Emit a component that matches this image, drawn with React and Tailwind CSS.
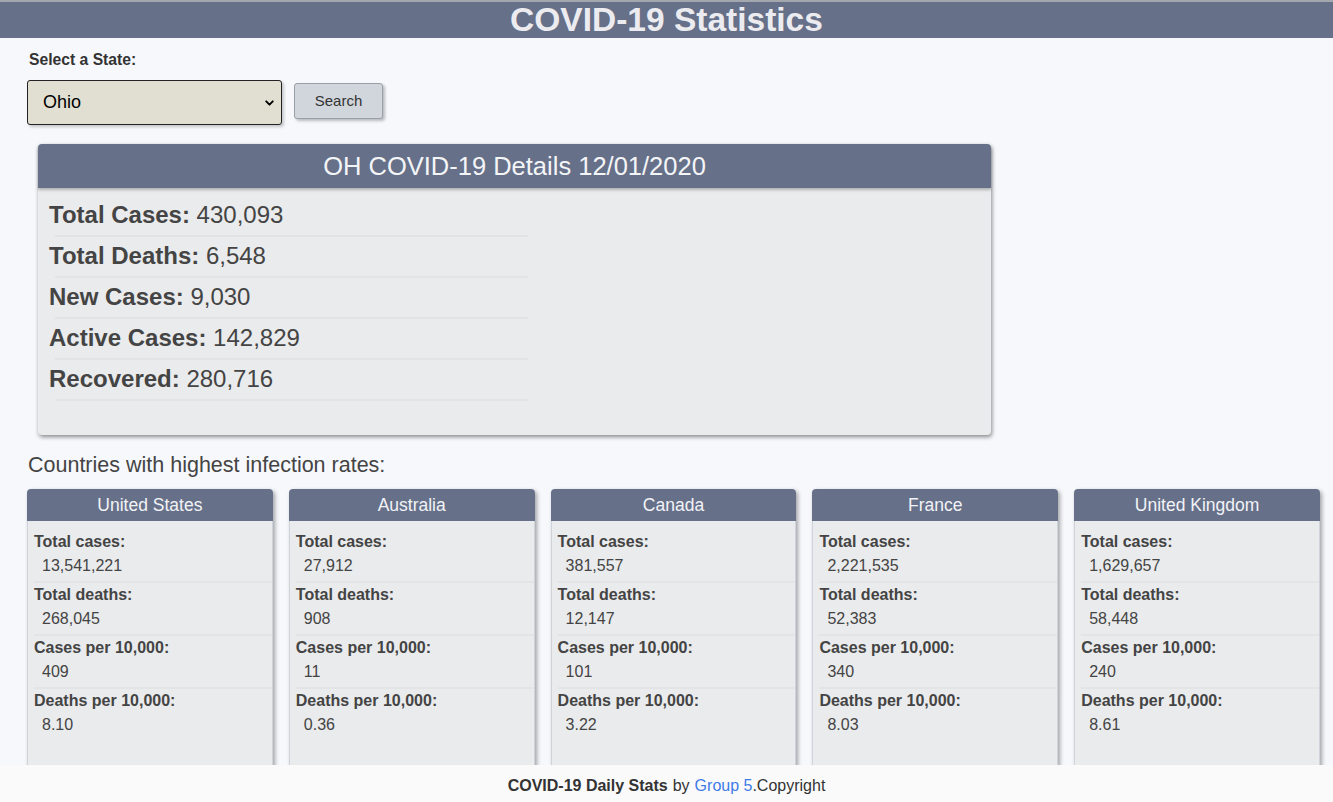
import { ChevronDown } from "lucide-react";

const details = [
  { label: "Total Cases:", value: "430,093" },
  { label: "Total Deaths:", value: "6,548" },
  { label: "New Cases:", value: "9,030" },
  { label: "Active Cases:", value: "142,829" },
  { label: "Recovered:", value: "280,716" },
];

const countries = [
  { name: "United States", cases: "13,541,221", deaths: "268,045", casesPer: "409", deathsPer: "8.10" },
  { name: "Australia", cases: "27,912", deaths: "908", casesPer: "11", deathsPer: "0.36" },
  { name: "Canada", cases: "381,557", deaths: "12,147", casesPer: "101", deathsPer: "3.22" },
  { name: "France", cases: "2,221,535", deaths: "52,383", casesPer: "340", deathsPer: "8.03" },
  { name: "United Kingdom", cases: "1,629,657", deaths: "58,448", casesPer: "240", deathsPer: "8.61" },
];

function StatRow({ label, value, last }) {
  return (
    <div className={`pt-[2px] pb-[5px] ${last ? "" : "border-b-2 border-[#e3e4e6]"}`}>
      <div className="text-[16px] font-bold leading-[20px]">{label}</div>
      <div className="mt-[4px] pl-2 text-[16px] leading-[20px]">{value}</div>
    </div>
  );
}

function CountryCard({ country }) {
  return (
    <div className="flex flex-col rounded-t-[4px] shadow-[2px_2px_4px_rgba(0,0,0,0.35)]">
      <div className="flex h-8 items-center justify-center rounded-t-[4px] bg-[#667089] text-[17.5px] text-[#f2f3f6]">
        {country.name}
      </div>
      <div className="h-[280px] border-l border-r border-[#cfd3da] bg-[#eaebed] pl-[6px] pt-[9px]">
        <StatRow label="Total cases:" value={country.cases} />
        <StatRow label="Total deaths:" value={country.deaths} />
        <StatRow label="Cases per 10,000:" value={country.casesPer} />
        <StatRow label="Deaths per 10,000:" value={country.deathsPer} last />
      </div>
    </div>
  );
}

export default function App() {
  return (
    <div className="min-h-screen bg-[#f7f8fc] pb-10 font-['Liberation_Sans',Arial,sans-serif] text-[#444]">
      <header className="flex h-[38px] items-center justify-center border-t-2 border-[#a3a8ae] bg-[#667089]">
        <h1 className="text-[33.5px] font-bold leading-none text-[#ececf0]">COVID-19 Statistics</h1>
      </header>

      <div className="pl-[27px] pr-[13px]">
        <label className="mt-[13px] block pl-[2px] text-[15.7px] font-bold leading-[18px] text-[#333]">
          Select a State:
        </label>

        <div className="mt-[11px] flex items-start gap-3">
          <div className="relative">
            <select
              defaultValue="Ohio"
              className="h-[45px] w-[255px] appearance-none rounded-[3px] border border-[#222] bg-[#e0dfd2] pl-[15px] text-[18px] text-black shadow-[2px_2px_3px_rgba(0,0,0,0.2)] outline-none"
            >
              <option>Ohio</option>
            </select>
            <ChevronDown
              strokeWidth={3.5}
              className="pointer-events-none absolute right-[6px] top-1/2 h-[13px] w-[13px] -translate-y-1/2 text-black"
            />
          </div>
          <button className="mt-[3px] h-[36px] w-[89px] rounded-[3px] border border-[#9aa0a8] bg-[#d1d5dc] text-[15px] text-[#333] shadow-[2px_2px_3px_rgba(0,0,0,0.25)]">
            Search
          </button>
        </div>

        <section className="ml-[11px] mt-[19px] w-[953px] rounded-[4px] bg-[#eaebec] shadow-[1px_2px_4px_rgba(0,0,0,0.45)]">
          <div className="flex h-[44px] items-center justify-center rounded-t-[4px] bg-[#667089] text-[25.5px] text-[#f4f5f7] shadow-[0_2px_3px_rgba(0,0,0,0.25)]">
            OH COVID-19 Details 12/01/2020
          </div>
          <div className="pb-[29px] pt-[13px]">
            {details.map((item) => (
              <div key={item.label}>
                <div className="px-[11px] text-[24px] leading-[27px]">
                  <span className="font-bold">{item.label}</span> {item.value}
                </div>
                <div className="ml-[17px] mt-[7px] mb-[5px] h-[2px] w-[473px] bg-[#e2e3e5]" />
              </div>
            ))}
          </div>
        </section>

        <h2 className="mt-[18px] pl-[1px] text-[21.5px] leading-[24px] text-[#444]">
          Countries with highest infection rates:
        </h2>

        <div className="mt-[12px] grid grid-cols-5 gap-4">
          {countries.map((country) => (
            <CountryCard key={country.name} country={country} />
          ))}
        </div>
      </div>

      <footer className="fixed bottom-0 left-0 right-0 flex h-[37px] items-center justify-center bg-[#fafafa] pt-[5px] text-[16px] text-[#333]">
        <span className="font-bold">COVID-19 Daily Stats</span>
        <span className="ml-[5px]">by</span>
        <a href="#" className="ml-[5px] text-[#3f7be8]">
          Group 5
        </a>
        <span>.Copyright</span>
      </footer>
    </div>
  );
}
